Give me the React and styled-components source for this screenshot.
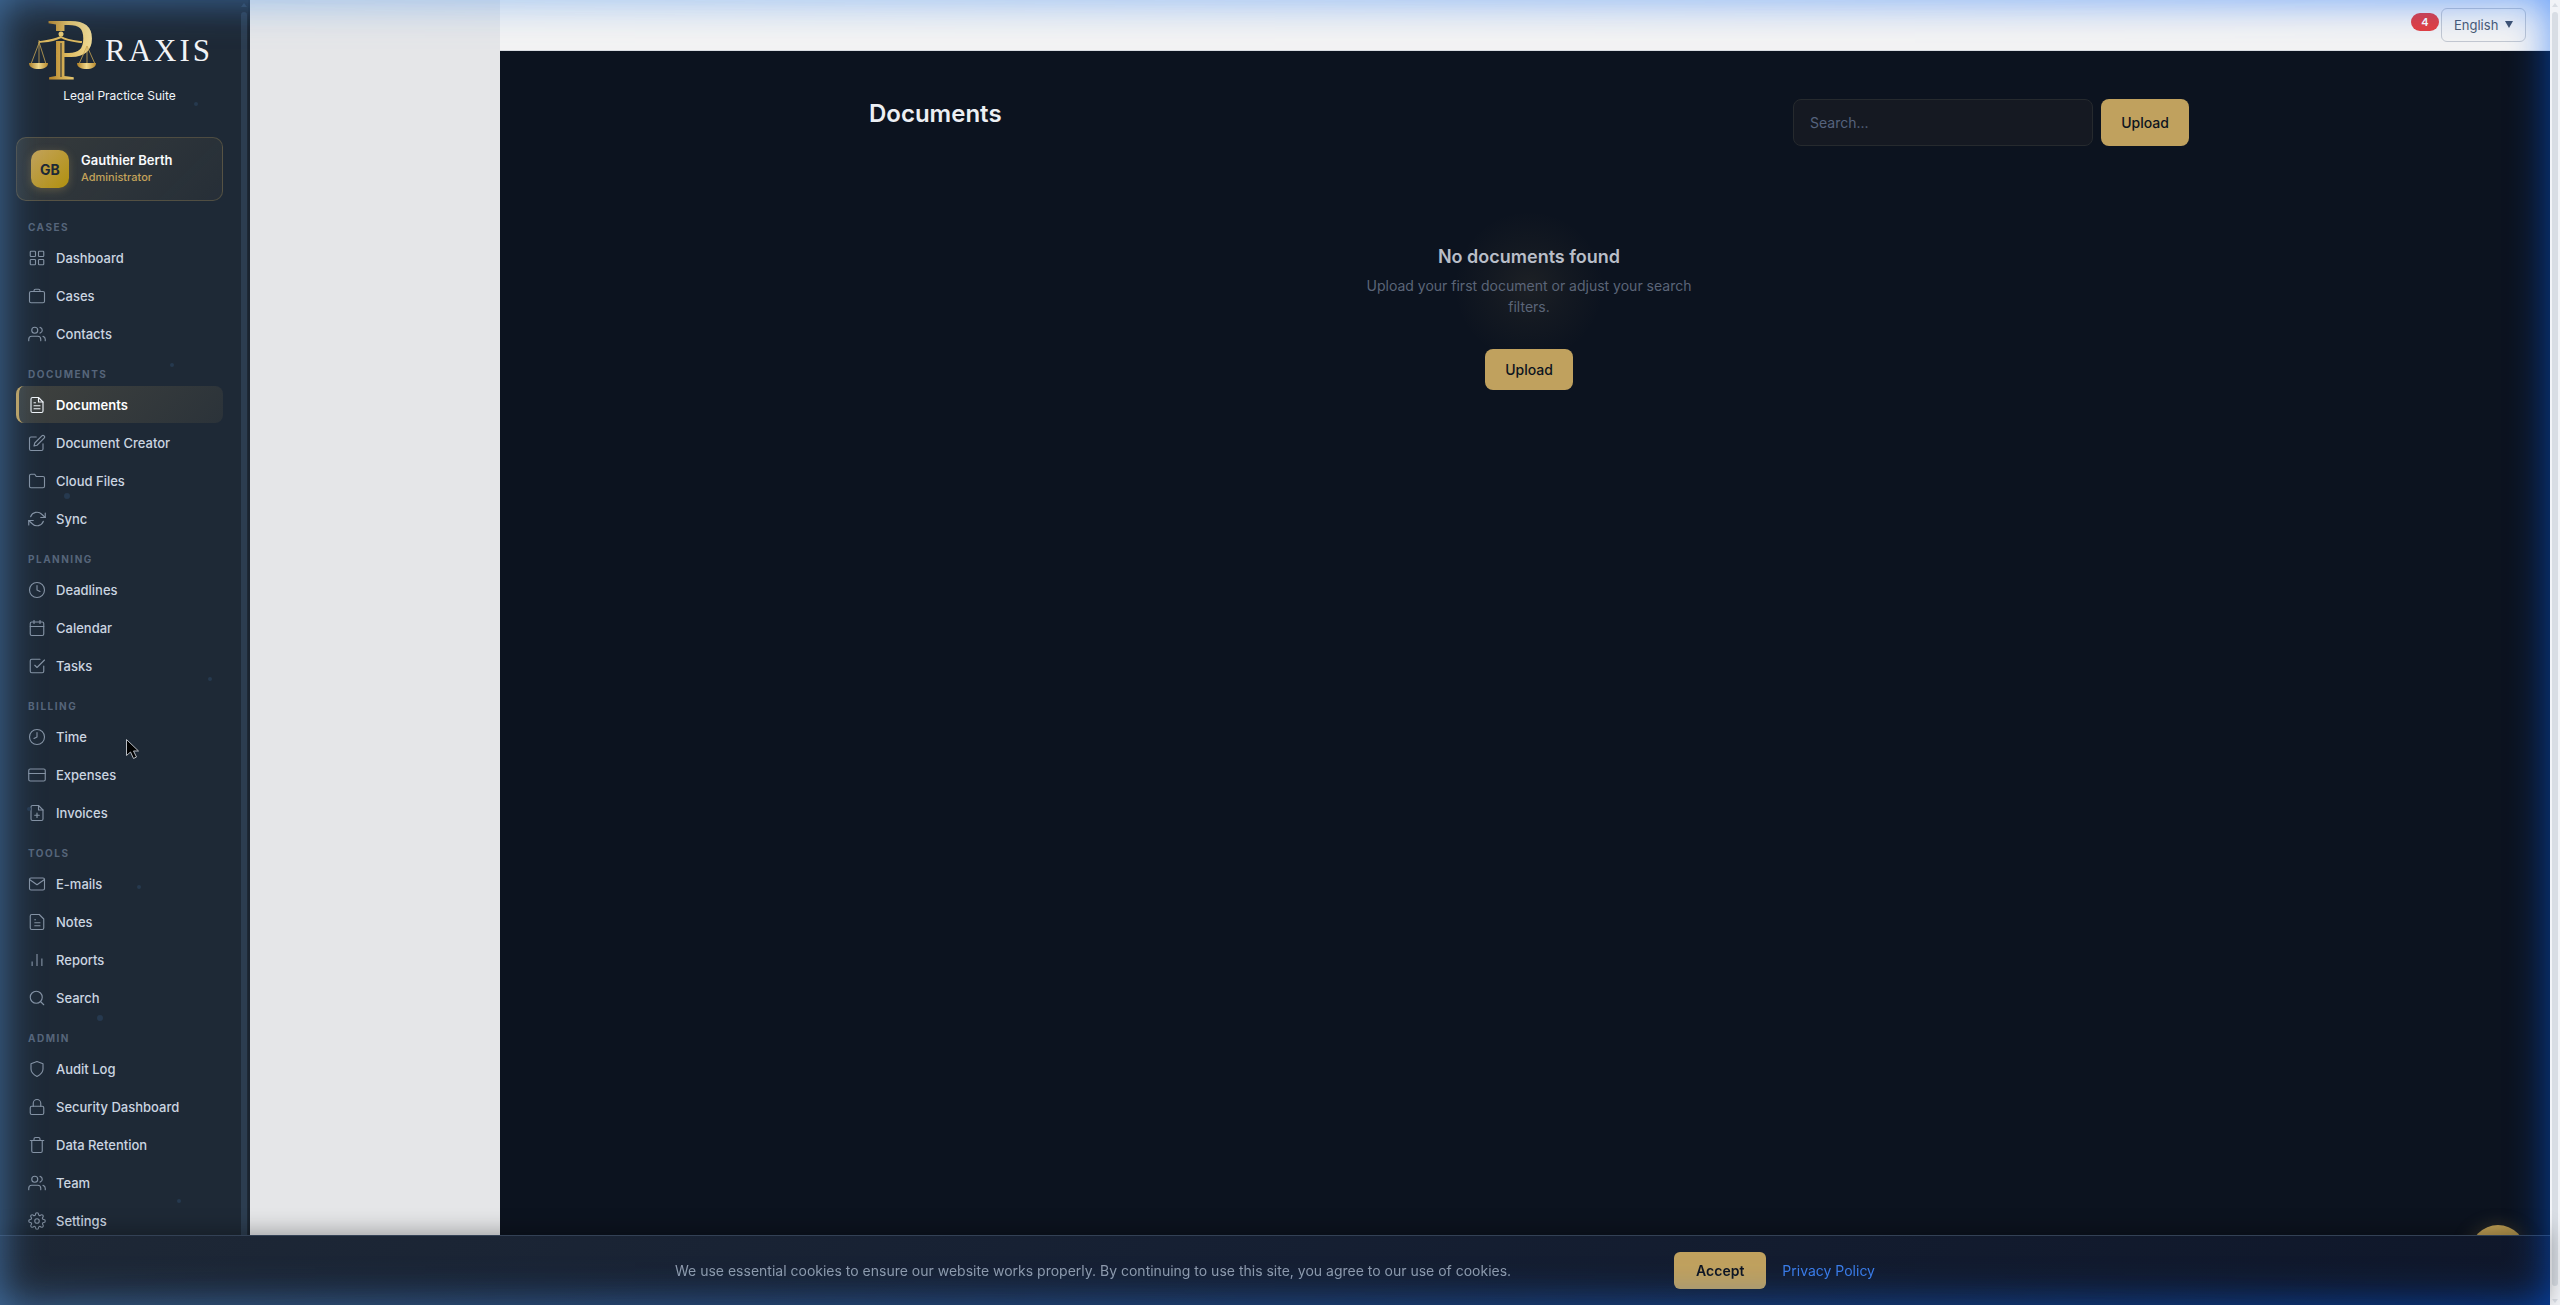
import React, {useState} from 'react'
import styled, {createGlobalStyle, css} from 'styled-components'
import {LayoutGrid} from 'lucide-react'
import {
    FiCalendar, FiCheckSquare, FiClock, FiCreditCard, FiEdit, FiFilePlus, FiFileText, FiFolder,
    FiLock, FiMail, FiRefreshCw, FiSearch, FiSettings, FiShield, FiTrash, FiUsers
} from 'react-icons/fi'

const GlobalStyle = createGlobalStyle`
    *, *::before, *::after {
        box-sizing: border-box;
    }
    body {
        margin: 0;
        background: #e5e6e8;
        font-family: Inter, "Liberation Sans", sans-serif;
        font-size: 14px;
    }
    button, input, select {
        font-family: inherit;
    }
`

const Shell = styled.div`
    display: flex;
    align-items: stretch;
    min-height: 100vh;
`

const Sidebar = styled.aside`
    position: relative;
    display: flex;
    flex: 0 0 250px;
    height: 100vh;
    overflow: hidden;
    background: #1e2936;
    color: #cbd5e1;
`

const SidebarBody = styled.div`
    flex: 1;
    min-width: 0;
    padding: 18px 17px 0 16px;
`

const Brand = styled.div`
    display: flex;
    flex-direction: column;
    align-items: center;
    gap: 6px;
    margin-bottom: 33px;
    color: #f1f5f9;
    font-size: 12px;
    line-height: 16px;
    svg {
        display: block;
        overflow: visible;
    }
`

const Profile = styled.div`
    display: flex;
    align-items: center;
    gap: 12px;
    height: 64px;
    padding: 0 14px;
    margin-bottom: 15px;
    border: 1px solid rgba(196, 164, 96, 0.25);
    border-radius: 10px;
    background: linear-gradient(135deg, rgba(196, 164, 96, 0.14), rgba(196, 164, 96, 0.05));
`

const Avatar = styled.div`
    display: flex;
    align-items: center;
    justify-content: center;
    width: 38px;
    height: 38px;
    border-radius: 10px;
    background: linear-gradient(135deg, #c4a35a, #b0900f);
    box-shadow: 0 2px 8px rgba(196, 164, 96, 0.3);
    color: #1e2936;
    font-size: 14px;
    font-weight: 700;
`

const ProfileName = styled.div`
    color: #f8fafc;
    font-size: 13px;
    font-weight: 600;
    line-height: 17px;
`

const ProfileRole = styled.div`
    color: #c4a35a;
    font-size: 11px;
    font-weight: 500;
    line-height: 17px;
`

const Section = styled.section`
    display: flex;
    flex-direction: column;
    gap: 1px;
    margin-bottom: 11px;
`

const SectionTitle = styled.h2`
    margin: 0 0 -1px;
    padding-left: 12px;
    color: #56657a;
    font-size: 10px;
    font-weight: 700;
    letter-spacing: 1.5px;
    line-height: 23px;
    text-transform: uppercase;
`

const NavLink = styled.a`
    display: flex;
    align-items: center;
    gap: 10px;
    height: 37px;
    padding: 0 12px;
    border-radius: 8px;
    color: #cbd5e1;
    font-size: 13px;
    font-weight: 500;
    text-decoration: none;
    svg {
        width: 18px;
        height: 18px;
        flex: none;
        color: #8592a3;
        stroke-width: 1.5;
    }
    ${({$active}) => $active && css`
        padding-left: 9px;
        border-left: 3px solid #c4a35a;
        background: linear-gradient(135deg, rgba(196, 164, 96, 0.2), rgba(196, 164, 96, 0.08));
        color: #fff;
        font-weight: 600;
        svg {
            color: #f1f5f9;
        }
    `}
`

const Scrollbar = styled.div`
    display: flex;
    flex: 0 0 10px;
    flex-direction: column;
    align-items: center;
    gap: 5px;
    padding: 3px 0 2px;
    height: 100vh;
    background: ${({$dark}) => ($dark ? 'transparent' : '#f1f3f7')};
    border-right: ${({$dark}) => ($dark ? '2px solid #1a2430' : '0')};
    color: ${({$dark}) => ($dark ? '#2c3d50' : '#d8dde4')};
    &::before, &::after {
        content: "";
        border: 3px solid transparent;
    }
    &::before {
        border-top: 0;
        border-bottom: 4px solid currentColor;
    }
    &::after {
        border-bottom: 0;
        border-top: 4px solid currentColor;
        margin: 8px 0 0;
    }
`

const Thumb = styled.div`
    flex: 1;
    width: 6px;
    border-radius: 3px;
    background: currentColor;
`

const Speck = styled.i`
    position: absolute;
    border-radius: 50%;
    background: #26394f;
`

const Gutter = styled.div`
    flex: 0 0 250px;
`

const Main = styled.main`
    display: flex;
    flex: 1;
    flex-direction: column;
    min-width: 0;
    background: #0c131f;
`

const TopBar = styled.header`
    display: flex;
    align-items: center;
    justify-content: flex-end;
    gap: 2px;
    height: 51px;
    padding-right: 24px;
    border-bottom: 1px solid #d9dce1;
    background: #f3f3f3;
`

const Badge = styled.span`
    width: 28px;
    margin-bottom: 6px;
    border-radius: 9px;
    background: #e53e3e;
    color: #fff;
    font-size: 11px;
    font-weight: 600;
    line-height: 18px;
    text-align: center;
`

const Language = styled.div`
    position: relative;
    select {
        appearance: none;
        width: 85px;
        height: 34px;
        padding: 0 12px;
        border: 1px solid #c3c8d0;
        border-radius: 6px;
        background: transparent;
        color: #4b5a70;
        font-size: 13px;
    }
    svg {
        position: absolute;
        top: 13px;
        right: 13px;
        pointer-events: none;
    }
`

const Content = styled.div`
    width: 100%;
    max-width: 1400px;
    margin: 0 auto;
    padding: 48px 36px 0 44px;
`

const PageHead = styled.div`
    display: flex;
    align-items: flex-start;
    justify-content: space-between;
`

const PageTitle = styled.h1`
    margin: 0;
    color: #eceff3;
    font-size: 24px;
    font-weight: 600;
    line-height: 29px;
`

const Actions = styled.div`
    display: flex;
    gap: 8px;
`

const SearchInput = styled.input`
    width: 300px;
    height: 47px;
    padding: 0 16px;
    border: 1px solid #262a2e;
    border-radius: 8px;
    background: #151922;
    color: #e2e8f0;
    font-size: 14px;
    &::placeholder {
        color: #56637d;
    }
`

const GoldButton = styled.button`
    min-width: 88px;
    height: ${({$height}) => $height}px;
    padding: 0 ${({$wide}) => ($wide ? 22 : 20)}px;
    border: 0;
    border-radius: ${({$wide}) => ($wide ? 6 : 8)}px;
    background: #c0a15e;
    color: #0d1420;
    font-size: 14px;
    font-weight: ${({$wide}) => ($wide ? 600 : 500)};
    cursor: pointer;
`

const Empty = styled.div`
    display: flex;
    flex-direction: column;
    align-items: center;
    padding: 99px 0 80px;
    text-align: center;
    background: radial-gradient(circle 75px at 50% 140px, rgba(196, 164, 96, 0.09), rgba(196, 164, 96, 0.04) 50%, transparent);
    h2 {
        margin: 0 0 6px;
        color: #b9bec8;
        font-size: 18px;
        font-weight: 600;
        line-height: 24px;
    }
    p {
        max-width: 340px;
        margin: 0 0 32px;
        color: #5b6578;
        font-size: 14px;
        line-height: 21px;
    }
`

const Fab = styled.button`
    position: fixed;
    right: 34px;
    bottom: 24px;
    width: 56px;
    height: 56px;
    border: 0;
    border-radius: 50%;
    background: linear-gradient(135deg, #c4a35a, #a8893c);
    box-shadow: 0 4px 20px rgba(196, 164, 96, 0.35);
`

const CookieBar = styled.div`
    position: fixed;
    right: 10px;
    bottom: 0;
    left: 0;
    height: 70px;
    padding: 0 24px;
    display: flex;
    align-items: center;
    justify-content: center;
    border-top: 1px solid #334155;
    background: linear-gradient(135deg, #1e2836, #162033 45%, #0f172a);
    box-shadow: 0 -4px 20px rgba(0, 0, 0, 0.3);
`

const CookieInner = styled.div`
    display: flex;
    align-items: center;
    gap: 16px;
    width: 100%;
    max-width: 1200px;
    p {
        flex: 1;
        margin: 0;
        color: #8f9bac;
        font-size: 14px;
    }
    a {
        color: #3b7de8;
        font-size: 14px;
        text-decoration: none;
    }
`

const EdgeGlow = styled.div`
    position: fixed;
    inset: 0 10px 0 0;
    pointer-events: none;
    &::before, &::after {
        content: "";
        position: absolute;
        inset: 0;
    }
    &::before {
        box-shadow: inset 0 0 40px rgba(90, 160, 235, 0.6);
        mask-image: linear-gradient(90deg, #000, transparent);
    }
    &::after {
        box-shadow: inset 0 0 40px rgba(0, 98, 255, 0.6);
        mask-image: linear-gradient(90deg, transparent, #000);
    }
`

const Pointer = styled.svg`
    position: absolute;
    top: 738px;
    left: 125px;
`

const BriefcaseIcon = () => (
    <svg viewBox="0 0 24 24" fill="none" stroke="currentColor" strokeLinecap="round" strokeLinejoin="round">
        <rect x="2" y="6" width="20" height="15" rx="2"/>
        <path d="M16 6V5a2 2 0 0 0-2-2h-4a2 2 0 0 0-2 2v1"/>
    </svg>
)

const TimeIcon = () => (
    <svg viewBox="0 0 24 24" fill="none" stroke="currentColor" strokeLinecap="round" strokeLinejoin="round">
        <circle cx="12" cy="12" r="10"/>
        <path d="M12 6v6l-4 2"/>
    </svg>
)

const NotesIcon = () => (
    <svg viewBox="0 0 24 24" fill="none" stroke="currentColor" strokeLinecap="round" strokeLinejoin="round">
        <path d="M15 2H5a2 2 0 0 0-2 2v16a2 2 0 0 0 2 2h14a2 2 0 0 0 2-2V8z"/>
        <path d="M9 9h1M9 13h7M9 17h7"/>
    </svg>
)

const ReportsIcon = () => (
    <svg viewBox="0 0 24 24" fill="none" stroke="currentColor">
        <path d="M5.5 20v-6M12 20V4M18.5 20V10"/>
    </svg>
)

const sections = [
    {title: 'Cases', items: [['Dashboard', LayoutGrid], ['Cases', BriefcaseIcon], ['Contacts', FiUsers]]},
    {title: 'Documents', items: [['Documents', FiFileText], ['Document Creator', FiEdit], ['Cloud Files', FiFolder], ['Sync', FiRefreshCw]]},
    {title: 'Planning', items: [['Deadlines', FiClock], ['Calendar', FiCalendar], ['Tasks', FiCheckSquare]]},
    {title: 'Billing', items: [['Time', TimeIcon], ['Expenses', FiCreditCard], ['Invoices', FiFilePlus]]},
    {title: 'Tools', items: [['E-mails', FiMail], ['Notes', NotesIcon], ['Reports', ReportsIcon], ['Search', FiSearch]]},
    {title: 'Admin', items: [['Audit Log', FiShield], ['Security Dashboard', FiLock], ['Data Retention', FiTrash], ['Team', FiUsers], ['Settings', FiSettings]]}
]

//x, y, size
const specks = [
    [194, 102, 4], [170, 363, 4], [64, 493, 6], [208, 677, 4],
    [27, 807, 4], [137, 885, 4], [97, 1015, 6], [177, 1199, 4]
]

const Logo = () => (
    <svg width="182" height="64" viewBox="0 0 182 64" role="img" aria-label="Praxis">
        <defs>
            <linearGradient id="gold" x1="0" y1="0" x2="1" y2="0">
                <stop offset="0" stopColor="#a9761f"/>
                <stop offset="0.45" stopColor="#e0bd62"/>
                <stop offset="1" stopColor="#f0dd9c"/>
            </linearGradient>
            <linearGradient id="pan" x1="0" y1="0" x2="1" y2="0">
                <stop offset="0" stopColor="#b07f24"/>
                <stop offset="0.5" stopColor="#f0d88a"/>
                <stop offset="1" stopColor="#b98a2e"/>
            </linearGradient>
        </defs>
        <text x="17" y="61" fontFamily="Liberation Serif, serif" fontSize="89" fill="url(#gold)">P</text>
        {/* cut the stem where the beam crosses it */}
        <path d="M24 13h14v10H24z" fill="#1e2936"/>
        <path d="M32 25v34" stroke="#1e2936" strokeWidth="1"/>
        <circle cx="32" cy="16" r="2.5" fill="#e6c873"/>
        <path d="M10 24c9-1 14-1 22-5 7 4 12 4 21 5" fill="none" stroke="#dcb95f" strokeWidth="2"/>
        <path d="M10 22v3L2 46M10 24l7 22M10 24v22M58 28l-8 18M58 28l8 18M58 28v18" fill="none" stroke="#c9a653" strokeWidth="0.8"/>
        <path d="M0 45h19c0 4-4 6-9.500 6S0 49 0 45z" fill="url(#pan)"/>
        <path d="M48 45h19c0 4-4 6-9.500 6S48 49 48 45z" fill="url(#pan)"/>
        <text x="76" y="43" fontFamily="Liberation Serif, serif" fontSize="31" letterSpacing="3" fill="#f1f3f6">RAXIS</text>
    </svg>
)

const App = () => {
    const [current, setCurrent] = useState('Documents')
    const [query, setQuery] = useState('')
    const [accepted, setAccepted] = useState(false)

    const onNavigate = (event, name) => {
        event.preventDefault()
        setCurrent(name)
    }

    return (
        <>
            <GlobalStyle/>
            <Shell>
                <Sidebar>
                    {specks.map(([x, y, size]) => (
                        <Speck key={y} style={{left: x, top: y, width: size, height: size}}/>
                    ))}
                    <SidebarBody>
                        <Brand>
                            <Logo/>
                            <span>Legal Practice Suite</span>
                        </Brand>
                        <Profile>
                            <Avatar>GB</Avatar>
                            <div>
                                <ProfileName>Gauthier Berth</ProfileName>
                                <ProfileRole>Administrator</ProfileRole>
                            </div>
                        </Profile>
                        <nav>
                            {sections.map(({title, items}) => (
                                <Section key={title}>
                                    <SectionTitle>{title}</SectionTitle>
                                    {items.map(([name, Icon]) => (
                                        <NavLink key={name} href="#" $active={current === name}
                                                 onClick={(event) => onNavigate(event, name)}>
                                            <Icon/>
                                            {name}
                                        </NavLink>
                                    ))}
                                </Section>
                            ))}
                        </nav>
                    </SidebarBody>
                    <Scrollbar $dark><Thumb/></Scrollbar>
                    <Pointer width="16" height="24" viewBox="0 0 16 24">
                        <path d="M1.500 1.500v16l4-3.500 3 6.500 3-1.500-3-6h5z" fill="#000" stroke="#b8bcc2" strokeWidth="1"/>
                    </Pointer>
                </Sidebar>
                <Gutter/>
                <Main>
                    <TopBar>
                        <Badge>4</Badge>
                        <Language>
                            <select aria-label="Language" defaultValue="en">
                                <option value="en">English</option>
                                <option value="fr">Français</option>
                            </select>
                            <svg width="8" height="7" viewBox="0 0 8 7"><path d="M0 0h8L4 7z" fill="#42526a"/></svg>
                        </Language>
                    </TopBar>
                    <Content>
                        <PageHead>
                            <PageTitle>Documents</PageTitle>
                            <Actions>
                                <SearchInput type="search" aria-label="Search documents" placeholder="Search..."
                                             value={query} onChange={(event) => setQuery(event.target.value)}/>
                                <GoldButton $height={47}>Upload</GoldButton>
                            </Actions>
                        </PageHead>
                        <Empty>
                            <h2>No documents found</h2>
                            <p>Upload your first document or adjust your search filters.</p>
                            <GoldButton $height={41}>Upload</GoldButton>
                        </Empty>
                    </Content>
                </Main>
                <Scrollbar><Thumb/></Scrollbar>
            </Shell>
            <Fab aria-label="Open assistant"/>
            {!accepted && (
                <CookieBar>
                    <CookieInner>
                        <p>We use essential cookies to ensure our website works properly. By continuing to use this site, you agree to our use of cookies.</p>
                        <GoldButton $height={37} $wide onClick={() => setAccepted(true)}>Accept</GoldButton>
                        <a href="#">Privacy Policy</a>
                    </CookieInner>
                </CookieBar>
            )}
            <EdgeGlow/>
        </>
    )
}

export default App
